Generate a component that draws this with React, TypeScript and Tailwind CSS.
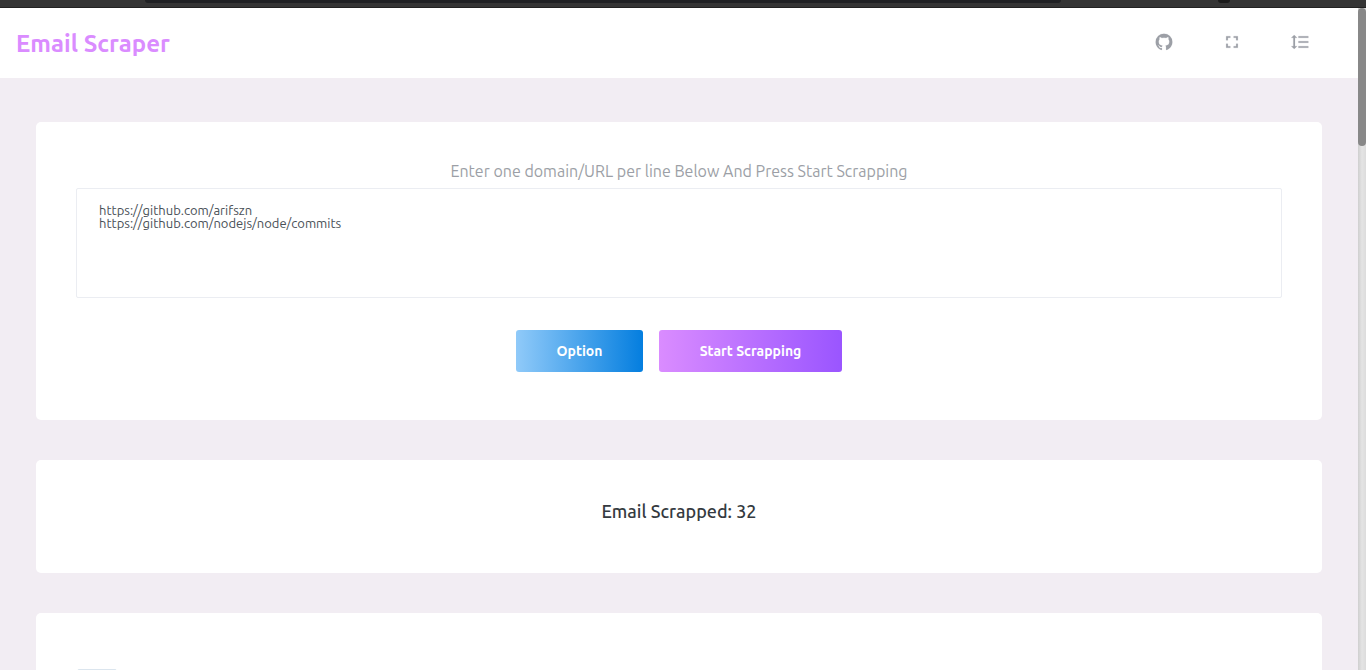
import React, { useState } from "react";

const icons = {
  github:
    "M12,2A10,10 0 0,0 2,12C2,16.42 4.87,20.17 8.84,21.5C9.34,21.58 9.5,21.27 9.5,21C9.5,20.77 9.5,20.14 9.5,19.31C6.73,19.91 6.14,17.97 6.14,17.97C5.68,16.81 5.03,16.5 5.03,16.5C4.12,15.88 5.1,15.9 5.1,15.9C6.1,15.97 6.63,16.93 6.63,16.93C7.5,18.45 8.97,18 9.54,17.76C9.63,17.11 9.89,16.67 10.17,16.42C7.95,16.17 5.62,15.31 5.62,11.5C5.62,10.39 6,9.5 6.65,8.79C6.55,8.54 6.2,7.5 6.75,6.15C6.75,6.15 7.59,5.88 9.5,7.17C10.29,6.95 11.15,6.84 12,6.84C12.85,6.84 13.71,6.95 14.5,7.17C16.41,5.88 17.25,6.15 17.25,6.15C17.8,7.5 17.45,8.54 17.35,8.79C18,9.5 18.38,10.39 18.38,11.5C18.38,15.32 16.04,16.16 13.81,16.41C14.17,16.72 14.5,17.33 14.5,18.26C14.5,19.6 14.5,20.68 14.5,21C14.5,21.27 14.66,21.59 15.17,21.5C19.14,20.16 22,16.42 22,12A10,10 0 0,0 12,2Z",
  fullscreen:
    "M5,5H10V7H7V10H5V5M14,5H19V10H17V7H14V5M17,14H19V19H14V17H17V14M10,17V19H5V14H7V17H10Z",
  spacing:
    "M10,13H22V11H10M10,19H22V17H10M10,7H22V5H10M6,7H8.5L5,3.5L1.5,7H4V17H1.5L5,20.5L8.5,17H6V7Z",
};

function Icon({ path }: { path: string }) {
  return (
    <svg viewBox="0 0 24 24" className="size-5 fill-current stroke-current stroke-[0.2]" aria-hidden="true">
      <path d={path} />
    </svg>
  );
}

function Card({ className, children }: { className: string; children: React.ReactNode }) {
  return <section className={`shrink-0 rounded-[5px] bg-white px-10 ${className}`}>{children}</section>;
}

export default function App() {
  const [urls, setUrls] = useState(
    "https://github.com/arifszn\nhttps://github.com/nodejs/node/commits"
  );

  return (
    <div className="flex h-screen flex-col overflow-hidden bg-[#f2edf3] font-['Ubuntu','Noto_Sans',sans-serif]">
      <div className="flex h-2 shrink-0 items-start border-b border-[#222222] bg-[#353535] pl-[145px]">
        <div className="h-[3px] w-3/4 rounded-b-md bg-[#202124]" />
        <div className="ml-auto mr-[136px] h-[3px] w-3 rounded-b-sm bg-[#1b1b1b]" />
      </div>

      <div className="flex min-h-0 flex-1">
        <div className="flex min-w-0 flex-1 flex-col">
          <header className="flex h-[70px] shrink-0 items-center justify-between bg-white pl-4 pr-6">
            <h1 className="pt-0.5 text-2xl font-bold text-[#da8cff]">Email Scraper</h1>
            <nav className="flex pb-0.5 text-[#9c9fa6]">
              <a href="https://github.com/arifszn" aria-label="GitHub" className="px-6">
                <Icon path={icons.github} />
              </a>
              <button type="button" aria-label="Fullscreen" className="px-6">
                <Icon path={icons.fullscreen} />
              </button>
              <button type="button" aria-label="Menu" className="px-6">
                <Icon path={icons.spacing} />
              </button>
            </nav>
          </header>

          <main className="flex min-h-0 flex-1 flex-col gap-10 px-9 pt-11">
            <Card className="pb-12 pt-[37px]">
              <label htmlFor="urls" className="block pb-[5px] text-center text-base text-[#9c9fa6]">
                Enter one domain/URL per line Below And Press Start Scrapping
              </label>
              <textarea
                id="urls"
                value={urls}
                onChange={(e) => setUrls(e.target.value)}
                spellCheck={false}
                className="block h-[110px] w-full resize-none rounded-[2px] border border-[#ebedf2] px-[22px] py-[15px] text-[13px] leading-[13px] text-[#495057] outline-none"
              />
              <div className="flex justify-center gap-4 pt-8">
                <button
                  type="button"
                  className="h-[42px] w-[127px] rounded-[3px] bg-linear-to-r/srgb from-[#90caf9] to-[#047edf] text-sm font-bold text-white"
                >
                  Option
                </button>
                <button
                  type="button"
                  className="h-[42px] w-[183px] rounded-[3px] bg-linear-to-r/srgb from-[#da8cff] to-[#9a55ff] text-sm font-bold text-white"
                >
                  Start Scrapping
                </button>
              </div>
            </Card>

            <Card className="h-[113px] pt-10">
              <h2 className="text-center text-[18px] font-medium leading-[22px] text-[#343a40]">
                Email Scrapped: 32
              </h2>
            </Card>

            <Card className="h-[360px] pt-14">
              <button
                type="button"
                aria-label="Copy"
                className="ml-px block h-10 w-10 rounded-[2px] border border-[#dbe5ee]"
              />
            </Card>
          </main>
        </div>

        <div className="w-2 shrink-0 bg-linear-to-r/srgb from-[#cfcfcf] via-[#e4e4e4] to-[#dcdcdc]" aria-hidden="true">
          <div className="h-[138px] rounded-[4px] bg-[#888888]" />
        </div>
      </div>
    </div>
  );
}
